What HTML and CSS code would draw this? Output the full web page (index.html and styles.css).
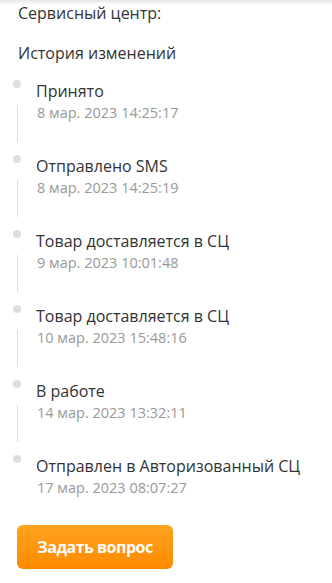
FILE: index.html
```html
<!DOCTYPE html>
<html lang="ru">
<head>
<meta charset="utf-8">
<link rel="stylesheet" href="styles.css">
</head>
<body>
<div class="page">
  <div class="label">Сервисный центр:</div>
  <div class="heading">История изменений</div>
  <ul class="timeline">
    <li class="item">
      <div class="marker"><span class="dot"></span><span class="line"></span></div>
      <div class="content"><div class="title">Принято</div><div class="date">8 мар. 2023 14:25:17</div></div>
    </li>
    <li class="item">
      <div class="marker"><span class="dot"></span><span class="line"></span></div>
      <div class="content"><div class="title">Отправлено SMS</div><div class="date">8 мар. 2023 14:25:19</div></div>
    </li>
    <li class="item">
      <div class="marker"><span class="dot"></span><span class="line"></span></div>
      <div class="content"><div class="title">Товар доставляется в СЦ</div><div class="date">9 мар. 2023 10:01:48</div></div>
    </li>
    <li class="item">
      <div class="marker"><span class="dot"></span><span class="line"></span></div>
      <div class="content"><div class="title">Товар доставляется в СЦ</div><div class="date">10 мар. 2023 15:48:16</div></div>
    </li>
    <li class="item">
      <div class="marker"><span class="dot"></span><span class="line"></span></div>
      <div class="content"><div class="title">В работе</div><div class="date">14 мар. 2023 13:32:11</div></div>
    </li>
    <li class="item last">
      <div class="marker"><span class="dot"></span></div>
      <div class="content"><div class="title">Отправлен в Авторизованный СЦ</div><div class="date">17 мар. 2023 08:07:27</div></div>
    </li>
  </ul>
  <button class="ask">Задать вопрос</button>
</div>
</body>
</html>
```

FILE: styles.css
```css
html, body {
  margin: 0;
  padding: 0;
}
body {
  background: #fff linear-gradient(#e4e4e4, #f6f6f6 3px, #fff 6px) no-repeat;
  background-size: 100% 6px;
  font-family: "Open Sans", "Noto Sans", sans-serif;
  color: #333;
}
.page {
  padding: 3px 0 0 18px;
}
.label, .heading {
  font-size: 16px;
  line-height: 20px;
}
.heading {
  margin-top: 20px;
}
.timeline {
  list-style: none;
  margin: 17px 0 0 0;
  padding: 0;
}
.item {
  display: flex;
  height: 75px;
}
.item.last {
  height: 70px;
}
.marker {
  width: 23px;
  margin-left: -5px;
  display: flex;
  flex-direction: column;
  align-items: flex-start;
}
.dot {
  width: 8px;
  height: 8px;
  border-radius: 50%;
  background: #dedede;
}
.line {
  width: 1px;
  height: 37px;
  margin: 17px 0 0 4px;
  background: #dcdcdc;
}
.content {
  padding-top: 1px;
}
.title {
  font-size: 16px;
  line-height: 20px;
  color: #333;
}
.date {
  margin-top: 2px;
  margin-left: 1px;
  font-size: 14.5px;
  line-height: 20px;
  color: #999;
}
.ask {
  display: block;
  margin-left: -1px;
  width: 156px;
  height: 44px;
  border: 0;
  border-radius: 6px;
  background: linear-gradient(#ffa420, #ff8900);
  color: #fff;
  font-family: "Open Sans", "Noto Sans", sans-serif;
  font-weight: 700;
  font-size: 16px;
  letter-spacing: -0.5px;
  padding: 0;
}
```
